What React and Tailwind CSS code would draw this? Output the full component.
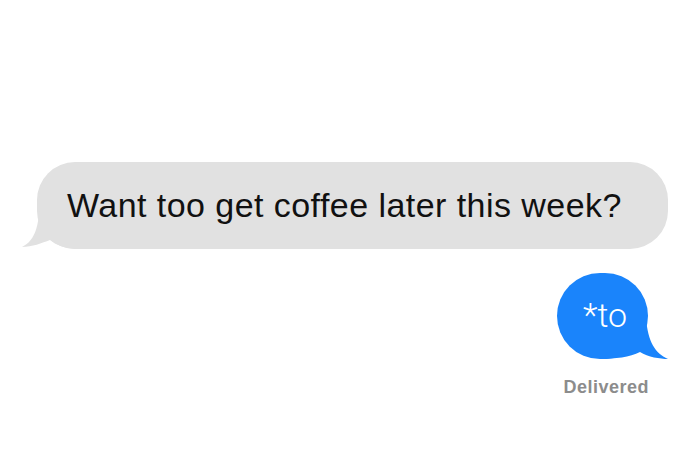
export default function App() {
  return (
    <div className="w-[700px] h-[467px] bg-white overflow-hidden" style={{ fontFamily: '"Liberation Sans", Arial, sans-serif' }}>
      <div className="pt-[162px] flex flex-col">
        <div className="pl-[37px]">
          <div className="relative w-[631px] h-[87px] rounded-[38px] bg-[#e1e1e1] flex items-center pl-[30px]">
            <svg className="absolute left-[-37px] top-[-12px]" width="80" height="100" viewBox="0 150 80 100">
              <path d="M 40 190 C 40 225, 36 240, 22 247 C 32 247, 42 243, 50 240 C 56 245, 64 248, 75 249 L 75 190 Z" fill="#e1e1e1" />
            </svg>
            <span className="relative text-[34px] leading-none text-[#111] tracking-[0.45px] pb-[1px]">Want too get coffee later this week?</span>
          </div>
        </div>
        <div className="mt-[24px] flex justify-end pr-[52px]">
          <div className="relative w-[91px] h-[86px] rounded-full bg-[#1a84fb] flex items-center justify-center">
            <svg className="absolute left-[40px] top-[40px]" width="80" height="50" viewBox="597 313 80 50">
              <path d="M 646 318 C 648 342, 655 353, 668 359 C 660 359, 648 357, 640 352 C 630 357, 615 359, 600 359 L 600 318 Z" fill="#1a84fb" />
            </svg>
            <span className="relative text-white text-[34px] leading-none pl-[5px] pb-[3px]" style={{ fontFamily: 'Roboto, "Liberation Sans", sans-serif', fontWeight: 300 }}>*to</span>
          </div>
        </div>
        <div className="mt-[18px] flex justify-end pr-[51px]">
          <span className="text-[18px] leading-[20px] font-bold tracking-[0.5px] text-[#8c8c8c]">Delivered</span>
        </div>
      </div>
    </div>
  );
}
